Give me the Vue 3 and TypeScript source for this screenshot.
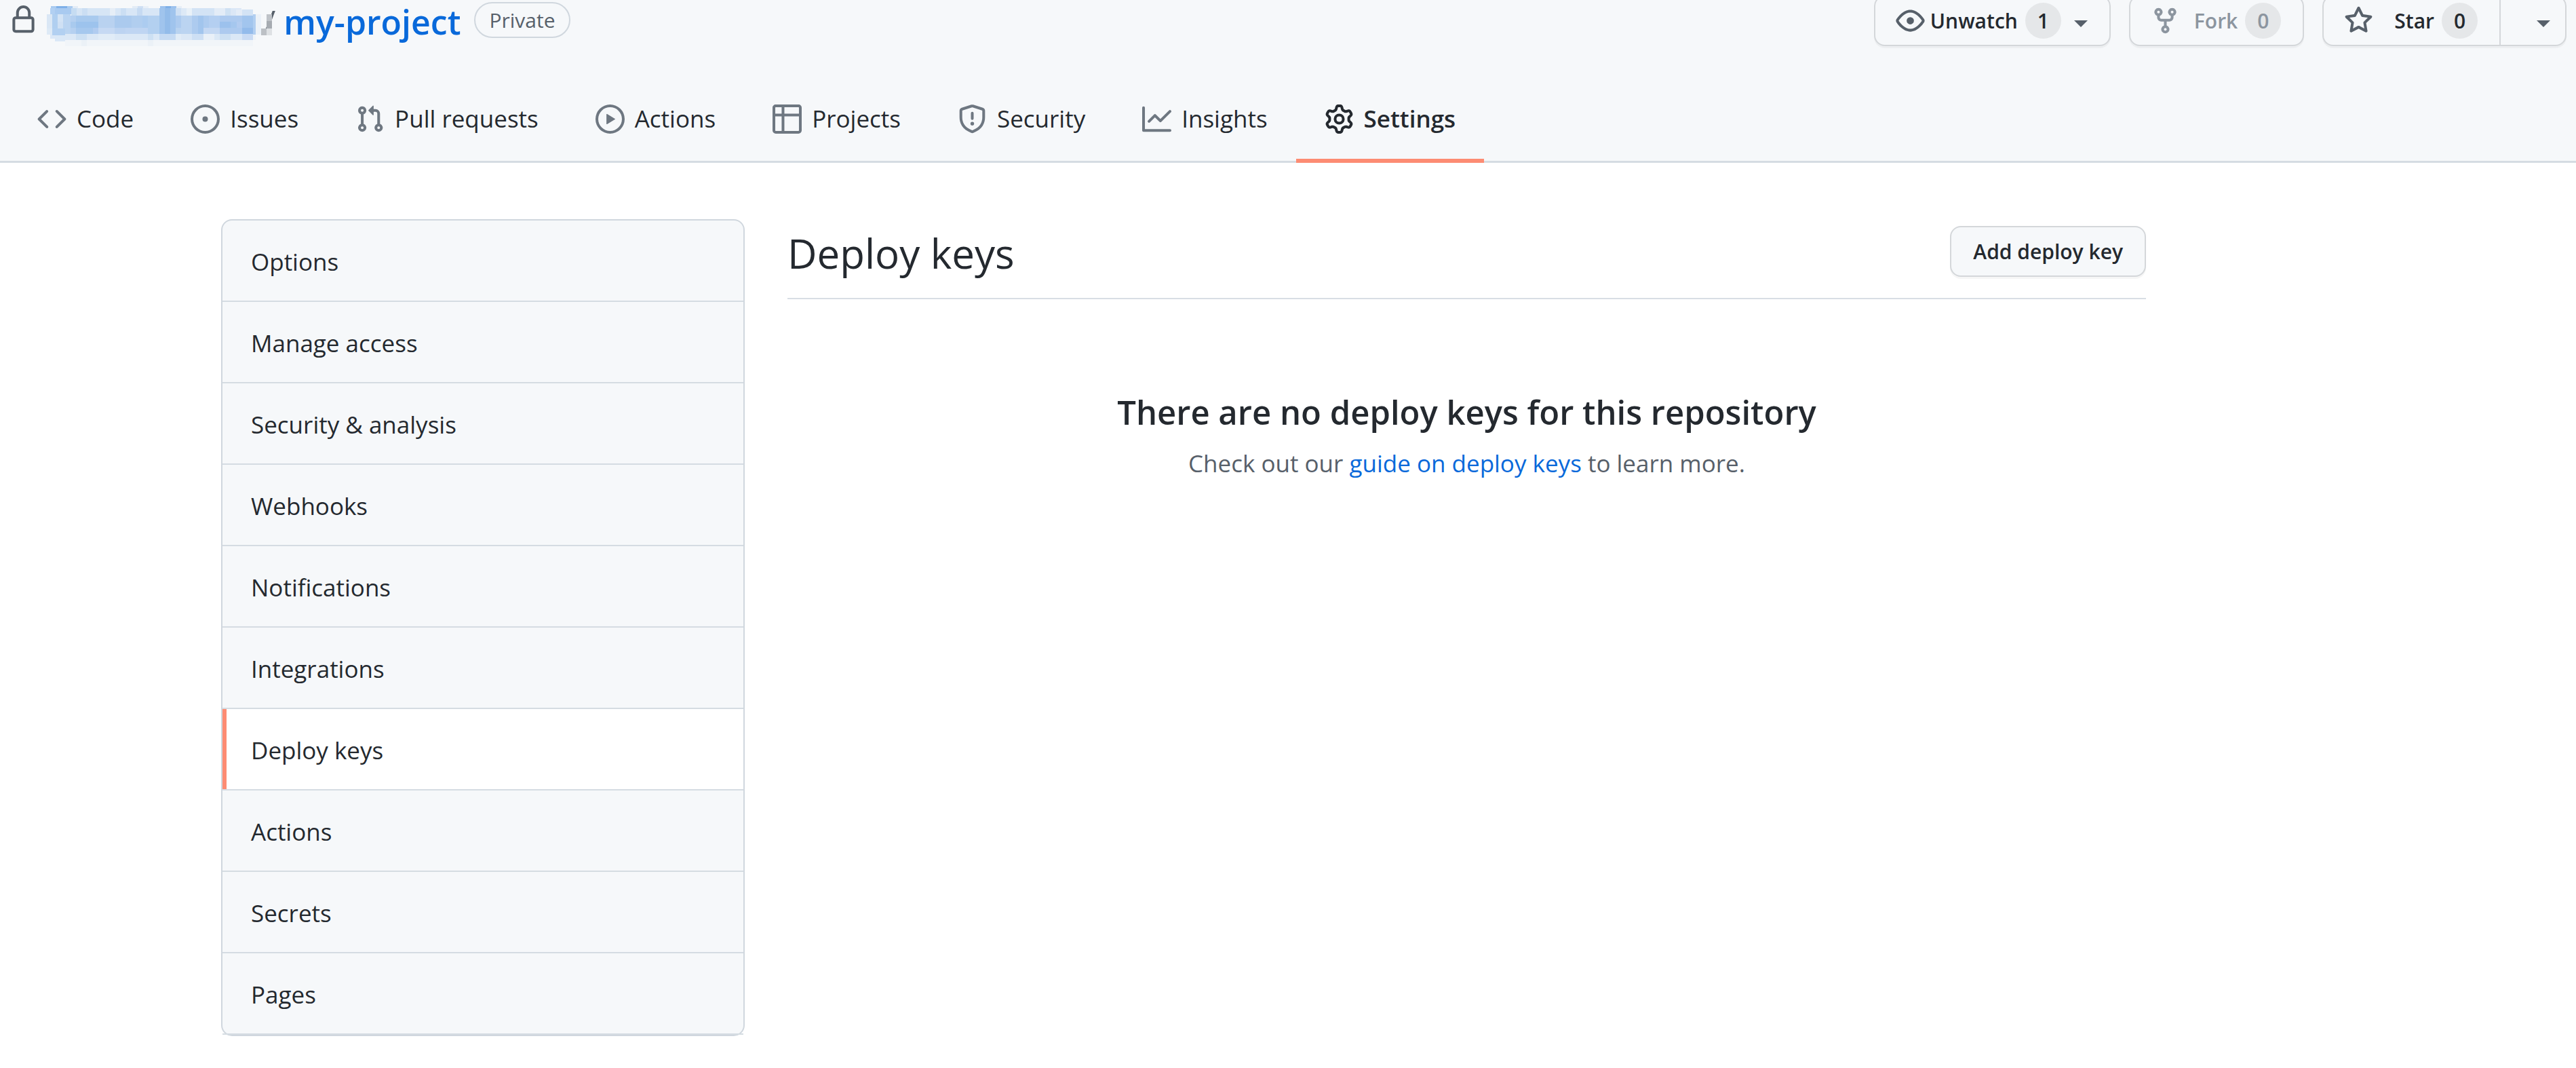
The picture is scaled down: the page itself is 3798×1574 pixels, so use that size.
<script setup lang="ts">
interface Tab {
  label: string
  icon: string
  current?: boolean
}

type Cell = [x: number, y: number, width: number, height: number, fill: string]

const lockIcon =
  'M4 4v2h-.25A1.75 1.75 0 002 7.75v5.5c0 .966.784 1.75 1.75 1.75h8.5A1.75 1.75 0 0014 13.25v-5.5A1.75 1.75 0 0012.25 6H12V4a4 4 0 10-8 0zm6.5 2V4a2.5 2.5 0 10-5 0v2h5zM12 7.5h.25a.25.25 0 01.25.25v5.5a.25.25 0 01-.25.25h-8.5a.25.25 0 01-.25-.25v-5.5a.25.25 0 01.25-.25H12z'
const eyeIcon =
  'M1.679 7.932c.412-.621 1.242-1.75 2.366-2.717C5.175 4.242 6.527 3.5 8 3.5c1.473 0 2.824.742 3.955 1.715 1.124.967 1.954 2.096 2.366 2.717a.119.119 0 010 .136c-.412.621-1.242 1.75-2.366 2.717C10.825 11.758 9.473 12.5 8 12.5c-1.473 0-2.824-.742-3.955-1.715C2.92 9.818 2.09 8.69 1.679 8.068a.119.119 0 010-.136zM8 2c-1.981 0-3.67.992-4.933 2.078C1.797 5.169.88 6.423.43 7.1a1.619 1.619 0 000 1.798c.45.678 1.367 1.932 2.637 3.024C4.329 13.008 6.019 14 8 14c1.981 0 3.67-.992 4.933-2.078 1.27-1.091 2.187-2.345 2.637-3.023a1.619 1.619 0 000-1.798c-.45-.678-1.367-1.932-2.637-3.023C11.671 2.992 9.981 2 8 2zm0 8a2 2 0 100-4 2 2 0 000 4z'
const forkIcon =
  'M5 3.25a.75.75 0 11-1.5 0 .75.75 0 011.5 0zm0 2.122a2.25 2.25 0 10-1.5 0v.878A2.25 2.25 0 005.75 8.5h1.5v2.128a2.251 2.251 0 101.5 0V8.5h1.5a2.25 2.25 0 002.25-2.25v-.878a2.25 2.25 0 10-1.5 0v.878a.75.75 0 01-.75.75h-4.5A.75.75 0 015 6.25v-.878zm3.75 7.378a.75.75 0 11-1.5 0 .75.75 0 011.5 0zm3-8.75a.75.75 0 100-1.5.75.75 0 000 1.5z'
const starIcon =
  'M8 .25a.75.75 0 01.673.418l1.882 3.815 4.21.612a.75.75 0 01.416 1.279l-3.046 2.97.719 4.192a.75.75 0 01-1.088.791L8 12.347l-3.766 1.98a.75.75 0 01-1.088-.79l.72-4.194L.818 6.374a.75.75 0 01.416-1.28l4.21-.611L7.327.668A.75.75 0 018 .25zm0 2.445L6.615 5.5a.75.75 0 01-.564.41l-3.097.45 2.24 2.184a.75.75 0 01.216.664l-.528 3.084 2.769-1.456a.75.75 0 01.698 0l2.77 1.456-.53-3.084a.75.75 0 01.216-.664l2.24-2.183-3.096-.45a.75.75 0 01-.564-.41L8 2.694v.001z'

const tabs: Tab[] = [
  {
    label: 'Code',
    icon: 'M4.72 3.22a.75.75 0 011.06 1.06L2.06 8l3.72 3.72a.75.75 0 11-1.06 1.06L.47 8.53a.75.75 0 010-1.06l4.25-4.25zm6.56 0a.75.75 0 10-1.06 1.06L13.94 8l-3.72 3.72a.75.75 0 101.06 1.06l4.25-4.25a.75.75 0 000-1.06l-4.25-4.25z',
  },
  {
    label: 'Issues',
    icon: 'M8 9.5a1.5 1.5 0 100-3 1.5 1.5 0 000 3zM8 0a8 8 0 100 16A8 8 0 008 0zM1.5 8a6.5 6.5 0 1113 0 6.5 6.5 0 01-13 0z',
  },
  {
    label: 'Pull requests',
    icon: 'M7.177 3.073L9.573.677A.25.25 0 0110 .854v4.792a.25.25 0 01-.427.177L7.177 3.427a.25.25 0 010-.354zM3.75 2.5a.75.75 0 100 1.5.75.75 0 000-1.5zm-2.25.75a2.25 2.25 0 113 2.122v5.256a2.251 2.251 0 11-1.5 0V5.372A2.25 2.25 0 011.5 3.25zM11 2.5h-1V4h1a1 1 0 011 1v5.628a2.251 2.251 0 101.5 0V5A2.5 2.5 0 0011 2.5zm1 10.25a.75.75 0 111.5 0 .75.75 0 01-1.5 0zM3.75 12a.75.75 0 100 1.5.75.75 0 000-1.5z',
  },
  {
    label: 'Actions',
    icon: 'M1.5 8a6.5 6.5 0 1113 0 6.5 6.5 0 01-13 0zM8 0a8 8 0 100 16A8 8 0 008 0zM6.379 5.227A.25.25 0 006 5.442v5.117a.25.25 0 00.379.214l4.264-2.559a.25.25 0 000-.428L6.379 5.227z',
  },
  {
    label: 'Projects',
    icon: 'M0 1.75C0 .784.784 0 1.75 0h12.5C15.216 0 16 .784 16 1.75v3.585a.746.746 0 010 .83v8.085A1.75 1.75 0 0114.25 16H6.309a.748.748 0 01-1.118 0H1.75A1.75 1.75 0 010 14.25V6.165a.746.746 0 010-.83V1.75zM1.5 6.5v7.75c0 .138.112.25.25.25H5v-8H1.5zM6.5 6.5v8h7.75a.25.25 0 00.25-.25V6.5h-8zM14.5 5V1.75a.25.25 0 00-.25-.25H6.5V5h8zM5 5V1.5H1.75a.25.25 0 00-.25.25V5H5z',
  },
  {
    label: 'Security',
    icon: 'M7.467.133a1.75 1.75 0 011.066 0l5.25 1.68A1.75 1.75 0 0115 3.48V7c0 1.566-.32 3.182-1.303 4.682-.983 1.498-2.585 2.813-5.032 3.855a1.7 1.7 0 01-1.33 0c-2.447-1.042-4.049-2.357-5.032-3.855C1.32 10.182 1 8.566 1 7V3.48a1.75 1.75 0 011.217-1.667l5.25-1.68zm.61 1.429a.25.25 0 00-.153 0l-5.25 1.68a.25.25 0 00-.174.238V7c0 1.358.275 2.666 1.057 3.86.784 1.194 2.121 2.34 4.366 3.297a.2.2 0 00.154 0c2.245-.956 3.582-2.104 4.366-3.298C13.225 9.666 13.5 8.36 13.5 7V3.48a.25.25 0 00-.174-.237l-5.25-1.68zM9 10.5a1 1 0 11-2 0 1 1 0 012 0zm-.25-5.75a.75.75 0 10-1.5 0v3a.75.75 0 001.5 0v-3z',
  },
  {
    label: 'Insights',
    icon: 'M1.5 1.75a.75.75 0 00-1.5 0v12.5c0 .414.336.75.75.75h14.5a.75.75 0 000-1.5H1.5V1.75zm14.28 2.53a.75.75 0 00-1.06-1.06L10 7.94 7.53 5.47a.75.75 0 00-1.06 0L3.22 8.72a.75.75 0 001.06 1.06L7 7.06l2.47 2.47a.75.75 0 001.06 0l5.25-5.25z',
  },
  {
    label: 'Settings',
    icon: 'M7.429 1.525a6.593 6.593 0 011.142 0c.036.003.108.036.137.146l.289 1.105c.147.56.55.967.997 1.189.174.086.341.183.501.29.417.278.97.423 1.53.27l1.102-.303c.11-.03.175.016.195.046.219.31.41.641.573.989.014.031.022.11-.059.19l-.815.806c-.411.406-.562.957-.53 1.456a4.588 4.588 0 010 .582c-.032.499.119 1.05.53 1.456l.815.806c.08.08.073.159.059.19a6.494 6.494 0 01-.573.99c-.02.029-.086.074-.195.045l-1.103-.303c-.559-.153-1.112-.008-1.529.27-.16.107-.327.204-.5.29-.449.222-.851.628-.998 1.189l-.289 1.105c-.029.11-.101.143-.137.146a6.613 6.613 0 01-1.142 0c-.036-.003-.108-.037-.137-.146l-.289-1.105c-.147-.56-.55-.967-.997-1.189a4.502 4.502 0 01-.501-.29c-.417-.278-.97-.423-1.53-.27l-1.102.303c-.11.03-.175-.016-.195-.046a6.492 6.492 0 01-.573-.989c-.014-.031-.022-.11.059-.19l.815-.806c.411-.406.562-.957.53-1.456a4.587 4.587 0 010-.582c.032-.499-.119-1.05-.53-1.456l-.815-.806c-.08-.08-.073-.159-.059-.19a6.44 6.44 0 01.573-.99c.02-.029.086-.075.195-.045l1.103.303c.559.153 1.112.008 1.529-.27.16-.107.327-.204.5-.29.449-.222.851-.628.998-1.189l.289-1.105c.029-.11.101-.143.137-.146zM8 0c-.236 0-.47.01-.701.03-.743.065-1.29.615-1.458 1.261l-.29 1.106c-.017.066-.078.158-.211.224a5.994 5.994 0 00-.668.386c-.123.082-.233.09-.3.071L3.27 2.776c-.644-.177-1.392.02-1.82.63a7.977 7.977 0 00-.704 1.217c-.315.675-.111 1.422.363 1.891l.815.806c.05.048.098.147.088.294a6.084 6.084 0 000 .772c.01.147-.038.246-.088.294l-.815.806c-.474.469-.678 1.216-.363 1.891.2.428.436.835.704 1.218.428.609 1.176.806 1.82.63l1.103-.303c.066-.019.176-.011.299.071.213.143.436.272.668.386.133.066.194.158.212.224l.289 1.106c.169.646.715 1.196 1.458 1.26a8.094 8.094 0 001.402 0c.743-.064 1.29-.614 1.458-1.26l.29-1.106c.017-.066.078-.158.211-.224a5.98 5.98 0 00.668-.386c.123-.082.233-.09.3-.071l1.102.302c.644.177 1.392-.02 1.82-.63.268-.382.505-.789.704-1.217.315-.675.111-1.422-.364-1.891l-.814-.806c-.05-.048-.098-.147-.088-.294a6.1 6.1 0 000-.772c-.01-.147.039-.246.088-.294l.814-.806c.475-.469.679-1.216.364-1.891a7.992 7.992 0 00-.704-1.218c-.428-.609-1.176-.806-1.82-.63l-1.103.303c-.066.019-.176.011-.299-.071a5.991 5.991 0 00-.668-.386c-.133-.066-.194-.158-.212-.224L10.16 1.29C9.99.645 9.444.095 8.701.031A8.094 8.094 0 008 0zm1.5 8a1.5 1.5 0 11-3 0 1.5 1.5 0 013 0zM11 8a3 3 0 11-6 0 3 3 0 016 0z',
    current: true,
  },
]

const menu: string[] = [
  'Options',
  'Manage access',
  'Security & analysis',
  'Webhooks',
  'Notifications',
  'Integrations',
  'Deploy keys',
  'Actions',
  'Secrets',
  'Pages',
]
const currentMenu = 'Deploy keys'

// Mosaic that masks the owner name.
const mosaic: Cell[] = [
  [15, 9, 8, 3, '#a9cbf0'], [23, 9, 16, 3, '#7fb0e8'], [39, 9, 8, 3, '#a9cbf0'], [47, 9, 8, 3, '#e3ecf6'],
  [135, 9, 8, 3, '#e3ecf6'], [143, 9, 8, 3, '#cfdff3'], [151, 9, 8, 3, '#e9f0f8'],
  [176, 9, 8, 3, '#9cc2ee'], [184, 9, 8, 3, '#7fb0e8'], [192, 9, 8, 3, '#9cc2ee'], [200, 9, 8, 3, '#e6eef7'],
  [14, 12, 7, 9, '#b2d0f2'], [21, 12, 24, 9, '#a9caf0'], [45, 12, 57, 11, '#d6e5f5'], [45, 12, 8, 11, '#c6dcf2'],
  [61, 12, 8, 11, '#cbdef3'], [102, 12, 8, 11, '#e6eef7'], [110, 12, 65, 11, '#d8e6f6'], [118, 12, 8, 11, '#cbdef3'],
  [142, 12, 8, 11, '#c6daf2'], [175, 12, 24, 38, '#a0c4ed'], [183, 12, 8, 38, '#93bcea'], [199, 12, 8, 11, '#cfe0f4'],
  [207, 12, 8, 11, '#dde9f6'], [215, 12, 8, 11, '#e9f1f8'], [223, 12, 33, 11, '#d3e3f5'], [256, 12, 16, 11, '#e3ecf7'],
  [272, 12, 8, 11, '#cfe1f3'], [280, 12, 16, 11, '#dbe7f6'], [288, 14, 9, 9, '#e4ecf7'], [297, 14, 16, 9, '#d3e3f5'],
  [9, 21, 8, 21, '#dae7f5'], [17, 21, 8, 30, '#b0cff0'], [25, 21, 8, 11, '#d3e3f5'], [33, 21, 3, 21, '#bad4f1'],
  [25, 32, 8, 10, '#cfe0f4'], [36, 21, 8, 29, '#bad4f1'], [44, 23, 8, 27, '#b5d0f0'], [52, 23, 33, 9, '#a9caee'],
  [44, 32, 8, 9, '#a9caee'], [52, 32, 33, 9, '#9dc3ed'], [52, 41, 25, 9, '#a6c8ee'], [77, 41, 8, 9, '#b1ccf0'],
  [85, 23, 24, 27, '#b9d2f0'], [85, 41, 24, 9, '#c6d9f3'], [109, 23, 25, 18, '#abcaee'], [109, 41, 16, 9, '#bcd3f1'],
  [125, 41, 34, 9, '#bfd5f2'], [134, 23, 16, 18, '#b1ceef'], [150, 23, 8, 18, '#acccf0'], [158, 23, 17, 27, '#b3d0f0'],
  [199, 23, 8, 18, '#adcbef'], [207, 23, 16, 27, '#bbd4f1'], [199, 41, 8, 9, '#b9d3f0'], [223, 23, 9, 27, '#adcbef'],
  [232, 23, 8, 27, '#a2c5ed'], [240, 23, 8, 27, '#adcbef'], [248, 23, 16, 18, '#b4cff1'], [240, 41, 24, 9, '#c4d8f3'],
  [264, 23, 33, 27, '#adcaef'], [264, 32, 16, 9, '#9cc1ed'], [280, 32, 17, 9, '#a5c7ee'], [297, 23, 16, 18, '#a2c5ee'],
  [297, 41, 16, 9, '#93bbeb'], [289, 32, 8, 9, '#b2ccf0'], [313, 21, 4, 30, '#b2cff1'], [317, 21, 8, 30, '#ebf1f8'],
  [9, 42, 8, 9, '#deeaf6'], [14, 51, 8, 6, '#dbe8f7'], [17, 42, 19, 10, '#b2d0f1'], [21, 52, 15, 9, '#dae8f7'],
  [36, 50, 277, 9, '#dbe8f6'], [52, 50, 16, 9, '#cde0f3'], [85, 50, 24, 9, '#e1ecf7'], [158, 50, 8, 9, '#cde0f3'],
  [175, 50, 24, 9, '#c6dbf3'], [199, 50, 8, 9, '#e1ecf7'], [223, 50, 17, 9, '#cddff4'], [240, 50, 16, 9, '#e9f0f8'],
  [264, 50, 16, 9, '#cde0f3'], [297, 50, 16, 9, '#c9dbf4'], [36, 59, 277, 9, '#f1f5f9'], [60, 59, 8, 9, '#ebf1f7'],
  [158, 59, 8, 9, '#ebf1f7'], [313, 51, 4, 8, '#eff4f9'],
  [333, 21, 8, 10, '#bfc3c8'], [333, 31, 8, 11, '#a6abb1'], [325, 42, 8, 10, '#bcc0c5'], [333, 42, 8, 10, '#dee1e4'],
]
</script>

<template>
  <div class="page">
    <header class="repo-header">
      <div class="title-row">
        <h1 class="repo-title">
          <svg class="icon muted lock" viewBox="0 0 16 16" aria-hidden="true"><path fill-rule="evenodd" :d="lockIcon" /></svg>
          <svg class="owner" viewBox="0 0 328 75" aria-hidden="true">
            <rect
              v-for="([x, y, w, h, fill], i) in mosaic"
              :key="i"
              :x="x"
              :y="y"
              :width="w"
              :height="h"
              :fill="fill"
            />
          </svg>
          <span class="slash">/</span>
          <a class="repo-name" href="#">my-project</a>
          <span class="pill">Private</span>
        </h1>
        <div class="repo-actions">
          <button type="button" class="btn unwatch">
            <svg class="icon muted" viewBox="0 0 16 16" aria-hidden="true"><path fill-rule="evenodd" :d="eyeIcon" /></svg>
            <span>Unwatch</span>
            <span class="counter">1</span>
            <span class="caret"></span>
          </button>
          <button type="button" class="btn fork" disabled>
            <svg class="icon" viewBox="0 0 16 16" aria-hidden="true"><path fill-rule="evenodd" :d="forkIcon" /></svg>
            <span>Fork</span>
            <span class="counter">0</span>
          </button>
          <div class="btn-group">
            <button type="button" class="btn star">
              <svg class="icon muted" viewBox="0 0 16 16" aria-hidden="true"><path fill-rule="evenodd" :d="starIcon" /></svg>
              <span>Star</span>
              <span class="counter">0</span>
            </button>
            <button type="button" class="btn star-menu" aria-label="Star lists"><span class="caret"></span></button>
          </div>
        </div>
      </div>
      <nav class="tabs" aria-label="Repository">
        <a
          v-for="tab in tabs"
          :key="tab.label"
          class="tab"
          :class="{ current: tab.current }"
          :aria-current="tab.current ? 'page' : undefined"
          href="#"
        >
          <svg class="icon" viewBox="0 0 16 16" aria-hidden="true"><path fill-rule="evenodd" :d="tab.icon" /></svg>
          <span>{{ tab.label }}</span>
        </a>
      </nav>
    </header>

    <div class="content">
      <nav class="menu" aria-label="Settings">
        <a
          v-for="item in menu"
          :key="item"
          class="menu-item"
          :class="{ current: item === currentMenu }"
          href="#"
        >{{ item }}</a>
      </nav>
      <main class="main">
        <div class="subhead">
          <h2>Deploy keys</h2>
          <button type="button" class="btn">Add deploy key</button>
        </div>
        <div class="blank">
          <h3>There are no deploy keys for this repository</h3>
          <p>Check out our <a href="#">guide on deploy keys</a> to learn more.</p>
        </div>
      </main>
    </div>
  </div>
</template>

<style>
body {
  margin: 0;
  background: #fff;
}
</style>

<style scoped>
.page {
  font-family: "Segoe UI", "Open Sans", "Noto Sans", sans-serif;
  font-size: 35px;
  line-height: 56px;
  color: #24292f;
}
a {
  color: #0969da;
  text-decoration: none;
}
h1,
h2,
h3,
p {
  margin: 0;
}
.icon {
  width: 43px;
  height: 43px;
  flex: none;
  fill: currentColor;
}
.muted {
  color: #57606a;
}
.repo-header {
  background: #f6f8fa;
  border-bottom: 3px solid #d5dce2;
}
.title-row {
  display: flex;
  justify-content: space-between;
  align-items: flex-start;
  height: 110px;
  padding: 0 14px 0 13px;
}
.repo-title {
  display: flex;
  align-items: flex-start;
  font-size: 50px;
  line-height: 64px;
  font-weight: 400;
}
.lock {
  margin-top: 8px;
}
.owner {
  position: relative;
  z-index: 1;
  width: 328px;
  height: 75px;
  margin-left: 4px;
  overflow: visible;
}
.slash {
  color: #57606a;
}
.repo-name {
  margin-left: 12px;
  font-weight: 600;
}
.pill {
  box-sizing: border-box;
  height: 53px;
  margin: 3px 0 0 20px;
  padding: 0 20px;
  border: 2px solid #d0d7de;
  border-radius: 27px;
  font-size: 30px;
  line-height: 49px;
  font-weight: 500;
  color: #57606a;
}
.repo-actions {
  display: flex;
  gap: 27px;
  margin-top: -7px;
}
.btn-group {
  display: flex;
}
.btn {
  display: flex;
  align-items: center;
  box-sizing: border-box;
  height: 75px;
  padding: 0 32px;
  border: 2px solid #d4d7da;
  border-radius: 16px;
  background: #f6f8fa;
  box-shadow: 0 3px 0 rgba(27, 31, 35, 0.04);
  font-family: inherit;
  font-size: 30px;
  line-height: 53px;
  font-weight: 600;
  color: #24292f;
}
.btn:disabled {
  color: #8c959f;
}
.counter {
  width: 53px;
  height: 53px;
  border-radius: 27px;
  background: #e5e7e9;
  text-align: center;
}
.caret {
  margin-top: 8px;
  border: 10px solid transparent;
  border-top-color: #57606a;
  border-bottom: 0;
}
.unwatch,
.fork,
.star {
  padding-left: 30px;
}
.unwatch .icon {
  margin-right: 8px;
}
.unwatch .counter {
  margin: 0 19px 0 11px;
}
.fork .icon {
  margin-right: 21px;
}
.fork .counter,
.star .counter {
  margin-left: 11px;
}
.star {
  border-right: 0;
  border-radius: 16px 0 0 16px;
}
.star .icon {
  margin-right: 31px;
}
.star-menu {
  padding: 0 22px 0 53px;
  border-radius: 0 16px 16px 0;
}
.tabs {
  display: flex;
  margin-bottom: -3px;
  padding-left: 13px;
}
.tab {
  display: flex;
  align-items: center;
  box-sizing: border-box;
  gap: 15px;
  height: 130px;
  padding: 0 42px;
  border-top: 6px solid transparent;
  border-bottom: 6px solid transparent;
  color: #24292f;
}
.tab .icon {
  color: #6e7781;
}
.tab.current {
  border-bottom-color: #fd8c73;
  font-weight: 600;
}
.tab.current .icon {
  color: #24292f;
}
.content {
  display: flex;
  align-items: flex-start;
  gap: 63px;
  padding: 83px 634px 47px 326px;
}
.menu {
  flex: 0 0 772px;
  box-sizing: border-box;
  border: 2px solid #d0d7de;
  border-radius: 16px;
  background: #f6f8fa;
}
.menu-item {
  display: block;
  box-sizing: border-box;
  height: 120px;
  padding: 0 42px;
  border-bottom: 2px solid #d5dce2;
  line-height: 121px;
  color: #24292f;
}
.menu-item.current {
  background: #fff;
  box-shadow: inset 6px 0 0 #fd8c73;
}
.main {
  flex: 1;
}
.subhead {
  display: flex;
  justify-content: space-between;
  align-items: flex-start;
  box-sizing: border-box;
  height: 118px;
  padding-top: 10px;
  border-bottom: 2px solid #d8dee4;
}
.subhead h2 {
  font-size: 60px;
  line-height: 80px;
  font-weight: 400;
}
.blank {
  padding: 126px 0;
  text-align: center;
}
.blank h3 {
  font-size: 49px;
  line-height: 80px;
  font-weight: 600;
}
.blank p {
  margin-top: 8px;
  color: #57606a;
}
</style>
